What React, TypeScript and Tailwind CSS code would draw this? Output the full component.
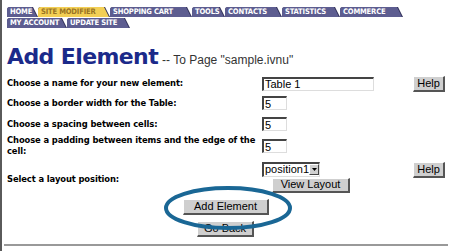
import React from "react";

const tabsRow1 = [
  { label: "HOME", w: 31, active: false },
  { label: "SITE MODIFIER", w: 72, active: true },
  { label: "SHOPPING CART", w: 82, active: false },
  { label: "TOOLS", w: 33, active: false },
  { label: "CONTACTS", w: 57, active: false },
  { label: "STATISTICS", w: 58, active: false },
  { label: "COMMERCE", w: 63, active: false },
];
const tabsRow2 = [
  { label: "MY ACCOUNT", w: 60, active: false },
  { label: "UPDATE SITE", w: 63, active: false },
];

function Tab({ label, w, active }: { label: string; w: number; active: boolean }) {
  return (
    <div className="relative h-[10px] shrink-0" style={{ width: w }}>
      <div
        className="absolute inset-0 rounded-tl-[3px] bg-[#2e2e55]"
        style={{ clipPath: "polygon(0 0, calc(100% - 5px) 0, 100% 100%, 0 100%)" }}
      />
      <div
        className={
          "absolute inset-0 rounded-tl-[3px] flex items-center pl-[3px] " +
          (active ? "bg-[#f3cf55] text-[#9a7424]" : "bg-[#5d5d90] text-white")
        }
        style={{ clipPath: "polygon(0 0, calc(100% - 6px) 0, calc(100% - 1px) 100%, 0 100%)" }}
      >
        <span className="font-['DejaVu_Sans_Condensed',sans-serif] font-bold text-[7.6px] leading-none whitespace-nowrap tracking-[-0.2px]">
          {label}
        </span>
      </div>
    </div>
  );
}

const inputCls =
  "h-[14px] bg-white border-t-[2px] border-l-[2px] border-t-[#444] border-l-[#444] border-b border-r border-b-[#ddd] border-r-[#ddd] font-['Liberation_Sans',sans-serif] text-[11px] leading-[10px] text-black pl-[1px] flex items-center";

const btnCls =
  "bg-[#cfcfcf] border-t border-l border-t-white border-l-white border-b-[2px] border-r-[2px] border-b-[#555] border-r-[#555] font-['Liberation_Sans',sans-serif] text-[11px] text-black flex items-center justify-center leading-none";

const labelCls =
  "font-['DejaVu_Sans',sans-serif] font-bold text-[8.4px] leading-[11px] text-black tracking-[-0.1px]";

export default function App() {
  return (
    <div className="relative w-[450px] h-[251px] bg-white overflow-hidden border-l-[2px] border-l-[#5a5a5a]">
      <div className="pl-[5px] pt-[7px] flex flex-col gap-[1px]">
        <div className="flex">
          {tabsRow1.map((t) => (
            <Tab key={t.label} {...t} />
          ))}
        </div>
        <div className="flex">
          {tabsRow2.map((t) => (
            <Tab key={t.label} {...t} />
          ))}
        </div>
      </div>

      <div className="pl-[5px] mt-[18px] flex items-baseline h-[24px]">
        <span className="font-['DejaVu_Sans',sans-serif] font-bold text-[22px] leading-none text-[#1b2a8a] tracking-[-0.6px]">
          Add Element
        </span>
        <span className="ml-[4px] font-['Liberation_Sans',sans-serif] text-[12px] text-[#333]">
          -- To Page "sample.ivnu"
        </span>
      </div>

      <div className="pl-[5px] mt-[6px] flex flex-col">
        <div className="flex items-center h-[15px]">
          <div className={labelCls + " w-[255px]"}>Choose a name for your new element:</div>
          <div className={inputCls + " w-[112px]"}>Table 1</div>
          <div className="flex-1" />
          <div className={btnCls + " w-[32px] h-[16px] mr-[5px]"}>Help</div>
        </div>
        <div className="flex items-center h-[14px] mt-[5px]">
          <div className={labelCls + " w-[255px]"}>Choose a border width for the Table:</div>
          <div className={inputCls + " w-[25px]"}>5</div>
        </div>
        <div className="flex items-center h-[14px] mt-[7px]">
          <div className={labelCls + " w-[255px]"}>Choose a spacing between cells:</div>
          <div className={inputCls + " w-[25px]"}>5</div>
        </div>
        <div className="flex items-start h-[22px] mt-[5px]">
          <div className={labelCls + " w-[255px] mt-[-1px]"}>
            Choose a padding between items and the edge of the
            <br />
            cell:
          </div>
          <div className={inputCls + " w-[25px] mt-[3px]"}>5</div>
        </div>
        <div className="flex h-[31px] mt-[4px]">
          <div className={labelCls + " w-[255px] self-center mt-[3px]"}>Select a layout position:</div>
          <div className="flex flex-col">
            <div className="flex items-center h-[15px] w-[58px] bg-white border-t-[2px] border-l-[2px] border-t-[#444] border-l-[#444] border-b border-r border-b-[#ddd] border-r-[#ddd]">
              <span className="flex-1 pl-[1px] font-['Liberation_Sans',sans-serif] text-[11px] leading-none text-black">
                position1
              </span>
              <div className="w-[11px] h-[11px] bg-[#cfcfcf] border-t border-l border-t-white border-l-white border-b border-r border-b-[#444] border-r-[#444] flex items-center justify-center">
                <svg width="5" height="3" viewBox="0 0 5 3">
                  <path d="M0 0 H5 L2.5 3 Z" fill="#000" />
                </svg>
              </div>
            </div>
            <div className={btnCls + " w-[78px] h-[16px] ml-[10px] mt-[1px]"}>View Layout</div>
          </div>
          <div className="flex-1" />
          <div className={btnCls + " w-[32px] h-[16px] mr-[5px]"}>Help</div>
        </div>
        <div className="flex flex-col items-start pl-[176px] mt-[6px]">
          <div className={btnCls + " w-[86px] h-[16px]"}>Add Element</div>
          <div className={btnCls + " w-[57px] h-[16px] ml-[14px] mt-[6px]"}>Go Back</div>
        </div>
      </div>

      <div className="absolute left-[2px] right-[2px] top-[244px] h-[2px] bg-[#999]" />

      <svg className="absolute left-[160px] top-[185px]" width="132" height="46" viewBox="0 0 132 46">
        <ellipse cx="66" cy="23" rx="62" ry="20" fill="none" stroke="#1a6795" strokeWidth="4" />
      </svg>
    </div>
  );
}
